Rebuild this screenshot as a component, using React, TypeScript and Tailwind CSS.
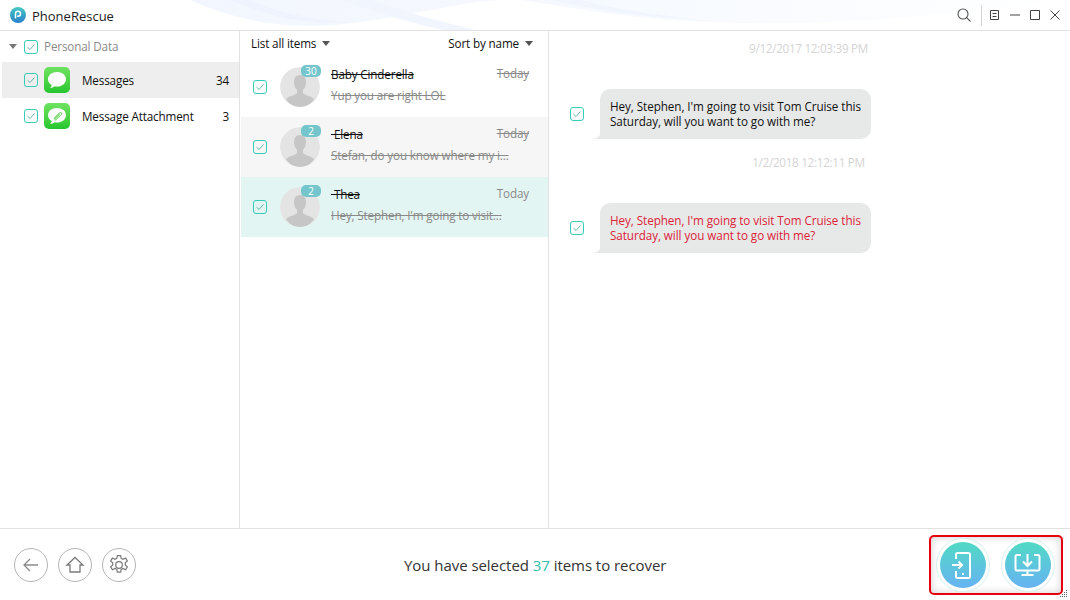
type Conversation = {
  name: string;
  preview: string;
  badge: string;
  struckDate: boolean;
  rowClass: string;
};

const conversations: Conversation[] = [
  { name: "Baby Cinderella", preview: "Yup you are right LOL", badge: "30", struckDate: true, rowClass: "bg-transparent" },
  { name: " Elena", preview: "Stefan, do you know where my i...", badge: "2", struckDate: true, rowClass: "bg-[#f6f6f6]" },
  { name: " Thea", preview: "Hey, Stephen, I'm going to visit...", badge: "2", struckDate: false, rowClass: "bg-[#e3f5f2]" },
];

function Check({ className = "" }: { className?: string }) {
  return (
    <span className={`flex h-[14px] w-[14px] shrink-0 items-center justify-center rounded-[3px] border border-[#35cdb8] ${className}`}>
      <svg width="10" height="10" viewBox="0 0 10 10" fill="none" stroke="#5fb8ae" strokeWidth="1">
        <path d="M1.5 5.2 4 7.5 8.5 2.5" />
      </svg>
    </span>
  );
}

function Caret({ color = "#555" }: { color?: string }) {
  return (
    <svg width="8" height="5" viewBox="0 0 8 5" className="shrink-0">
      <path d="M0 0h8L4 5z" fill={color} />
    </svg>
  );
}

function AppIcon({ clip }: { clip?: boolean }) {
  return (
    <span className="ml-[6px] flex h-[26px] w-[26px] shrink-0 items-center justify-center rounded-[5px] bg-gradient-to-b from-[#6ee35f] to-[#22c62e]">
      <svg width="22" height="20" viewBox="0 0 22 20">
        <path d="M11 2C5.8 2 2 5.2 2 9.2c0 2.500 1.500 4.600 3.800 5.900-.3 1.200-1 2.200-1.800 2.900 1.700-.1 3.300-.8 4.500-1.800.8.200 1.600.3 2.500.3 5.200 0 9-3.200 9-7.300S16.200 2 11 2z" fill="#fff" />
        {clip && <path d="M8 12.500 13.500 7c1.500-1.300 3 .4 1.800 1.700l-5.300 5c-.8.700-1.700-.2-1-1l4.500-4.300" fill="none" stroke="#7fdc74" strokeWidth="1.100" />}
      </svg>
    </span>
  );
}

function Avatar({ badge }: { badge: string }) {
  return (
    <div className="relative h-10 w-10 shrink-0">
      <svg width="40" height="40" viewBox="0 0 40 40" className="rounded-full">
        <circle cx="20" cy="20" r="20" fill="#e4e4e4" />
        <path d="M20 8c-4 0-6 3-6 7 0 3 1 6 3 8v3c-1 2-8 3-11 6 3 5 8 8 14 8s11-3 14-8c-3-3-10-4-11-6v-3c2-2 3-5 3-8 0-4-2-7-6-7z" fill="#c6c6c6" />
      </svg>
      <span className="absolute -right-px -top-[2px] flex h-3 w-5 items-center justify-center rounded-[5px] bg-[#74c6cc] text-[10px] leading-none tracking-normal text-white">
        {badge}
      </span>
    </div>
  );
}

function Bubble({ red }: { red?: boolean }) {
  return (
    <div className="flex items-center pl-[21px]">
      <Check />
      <div className="relative ml-[16px] flex h-[50px] w-[271px] items-center rounded-[10px] bg-[#e7e9e8] pl-[10px] pr-[8px]">
        <svg width="16" height="10" viewBox="0 0 16 10" className="absolute -left-[6px] bottom-0">
          <path d="M6 0v5C6 7 3 9 0 10h16V0z" fill="#e7e9e8" />
        </svg>
        <p className={`relative leading-[15px] tracking-[-0.07px] ${red ? "text-[#dc2338]" : "text-[#111]"}`}>
          Hey, Stephen, I'm going to visit Tom Cruise this Saturday, will you want to go with me?
        </p>
      </div>
    </div>
  );
}

function RoundButton({ children }: { children: React.ReactNode }) {
  return (
    <span className="flex h-[34px] w-[34px] items-center justify-center rounded-full border border-[#b5b5b5]">
      {children}
    </span>
  );
}

function ActionButton({ children }: { children: React.ReactNode }) {
  return (
    <span className="flex h-[54px] w-[54px] items-center justify-center rounded-full border border-[#d6f1ee] bg-white">
      <span className="flex h-[46px] w-[46px] items-center justify-center rounded-full bg-gradient-to-b from-[#50d9c3] to-[#67b2f2]">
        {children}
      </span>
    </span>
  );
}

export default function App() {
  return (
    <div className="relative flex h-[600px] w-[1070px] flex-col overflow-hidden bg-white font-['Open_Sans',sans-serif] text-[11.7px] tracking-[-0.15px] text-[#111]">
      <svg width="900" height="80" viewBox="0 0 900 80" className="pointer-events-none absolute left-[180px] top-0" fill="none">
        <defs>
          <linearGradient id="wave" x1="0" y1="0" x2="1" y2="0">
            <stop offset="0" stopColor="#f2f6fe" />
            <stop offset="0.55" stopColor="#f7faff" />
            <stop offset="1" stopColor="#ffffff" />
          </linearGradient>
        </defs>
        <path d="M10 0C50 18 90 26 130 26 200 26 290 -4 340 0 400 8 440 20 560 23 640 24 700 20 760 14 820 8 870 4 900 0z" fill="url(#wave)" />
        <path d="M50 0C90 16 120 25 170 22 130 20 90 10 70 0z" fill="#eef3fe" />
        <path d="M160 0C200 12 230 24 270 31L300 31C260 22 220 10 190 0z" fill="#f0f5fe" />
        <path d="M370 0C400 6 440 14 480 17L540 22C480 16 430 8 400 0z" fill="#f0f5fe" />
      </svg>

      <header className="relative flex h-[31px] shrink-0 items-center border-b border-[#e1e1e1] pl-[10px] pr-[10px]">
        <svg width="16" height="16" viewBox="0 0 16 16">
          <defs>
            <linearGradient id="logo" x1="0" y1="0" x2="0" y2="1">
              <stop offset="0" stopColor="#45c9c4" />
              <stop offset="1" stopColor="#2a7fc9" />
            </linearGradient>
          </defs>
          <circle cx="8" cy="8" r="8" fill="url(#logo)" />
          <path d="M5.500 11.500V6.800a2.500 2.500 0 1 1 2.500 2.500H7" fill="none" stroke="#fff" strokeWidth="1.500" />
        </svg>
        <span className="ml-[6px] pt-[3px] text-[13px] tracking-normal text-[#222]">PhoneRescue</span>
        <div className="ml-auto flex items-center">
          <svg width="14" height="14" viewBox="0 0 14 14" fill="none" stroke="#555" strokeWidth="1.100">
            <circle cx="6" cy="6" r="5" />
            <path d="m9.700 9.700 3.800 3.800" />
          </svg>
          <span className="ml-[10px] h-[21px] w-px bg-[#d5d5d5]" />
          <svg width="9" height="10" viewBox="0 0 9 10" fill="none" stroke="#444" className="ml-[8px]">
            <path d="M.5.500h8v9h-8zM2.500 3.500h4M2.500 6.500h4" />
          </svg>
          <svg width="10" height="2" viewBox="0 0 10 2" className="ml-[11px]">
            <path d="M0 1h10" stroke="#444" />
          </svg>
          <svg width="10" height="10" viewBox="0 0 10 10" fill="none" stroke="#444" className="ml-[10px]">
            <path d="M.5.500h9v9h-9z" />
          </svg>
          <svg width="10" height="10" viewBox="0 0 10 10" fill="none" stroke="#444" className="ml-[10px]">
            <path d="m.5.500 9 9M9.500.500l-9 9" />
          </svg>
        </div>
      </header>

      <main className="relative flex min-h-0 flex-1">
        <aside className="flex w-[240px] shrink-0 flex-col border-r border-[#e1e1e1] pt-[7px]">
          <div className="flex h-[17px] items-center pl-[9px]">
            <Caret color="#777" />
            <Check className="ml-[7px]" />
            <span className="ml-[6px] text-[#8b8b8b]">Personal Data</span>
          </div>
          <div className="ml-[2px] mt-[7px] flex h-9 items-center bg-[#eeeeee] pl-[22px] pr-[10px]">
            <Check />
            <AppIcon />
            <span className="ml-3 pt-[2px]">Messages</span>
            <span className="ml-auto pt-[2px]">34</span>
          </div>
          <div className="ml-[2px] flex h-9 items-center pl-[22px] pr-[10px]">
            <Check />
            <AppIcon clip />
            <span className="ml-3 pt-[2px]">Message Attachment</span>
            <span className="ml-auto pt-[2px]">3</span>
          </div>
        </aside>

        <section className="flex w-[309px] shrink-0 flex-col border-r border-[#e1e1e1]">
          <div className="flex h-[26px] items-center justify-between pl-[11px] pr-[15px]">
            <span className="flex items-center gap-[6px]">List all items <Caret /></span>
            <span className="flex items-center gap-[6px]">Sort by name <Caret /></span>
          </div>
          {conversations.map((item) => (
            <div key={item.name} className={`ml-px flex h-[60px] items-center pl-[12px] pr-[19px] ${item.rowClass}`}>
              <Check />
              <div className="ml-[13px]"><Avatar badge={item.badge} /></div>
              <div className="mb-[5px] ml-[11px] min-w-0 flex-1">
                <div className="flex items-start justify-between">
                  <span className="whitespace-pre leading-[16px] text-[#111] line-through">{item.name}</span>
                  <span className={`-mt-px leading-[16px] text-[#8a8a8a] ${item.struckDate ? "line-through" : ""}`}>Today</span>
                </div>
                <div className="mt-[5px] whitespace-nowrap leading-[16px] text-[#8a8a8a] line-through">{item.preview}</div>
              </div>
            </div>
          ))}
        </section>

        <section className="flex min-w-0 flex-1 flex-col">
          <p className="mt-[9px] h-[16px] pr-[2px] text-center leading-[16px] tracking-[-0.3px] text-[#d4d4d4]">9/12/2017 12:03:39 PM</p>
          <div className="mt-[33px]"><Bubble /></div>
          <p className="mt-[15px] h-[16px] pr-[2px] text-center leading-[16px] tracking-[-0.3px] text-[#d4d4d4]">1/2/2018 12:12:11 PM</p>
          <div className="mt-[33px]"><Bubble red /></div>
        </section>
      </main>

      <footer className="relative flex h-[72px] shrink-0 items-center border-t border-[#e1e1e1] pl-[14px] pr-[7px]">
        <div className="flex w-[122px] items-center gap-[10px]">
          <RoundButton>
            <svg width="18" height="18" viewBox="0 0 18 18" fill="none" stroke="#8a8a8a" strokeWidth="1.300">
              <path d="M16 9H2M8 3 2 9l6 6" />
            </svg>
          </RoundButton>
          <RoundButton>
            <svg width="20" height="20" viewBox="0 0 20 20" fill="none" stroke="#7a7a7a" strokeWidth="1.300">
              <path d="M2 10 10 2.500 18 10h-3v7H5v-7z" />
            </svg>
          </RoundButton>
          <RoundButton>
            <svg width="22" height="22" viewBox="0 0 20 20" fill="none" stroke="#7a7a7a" strokeWidth="1.100">
              <circle cx="10" cy="10" r="3" />
              <path d="M8.500 1.500h3l.5 2.500 1.700.8 2.300-1.100 1.600 2.600-1.900 1.700v2l1.900 1.700-1.600 2.600-2.300-1.100-1.700.8-.5 2.500h-3l-.5-2.500-1.700-.8-2.300 1.100-1.600-2.600 1.900-1.700v-2L2.400 6.300 4 3.700l2.300 1.100 1.700-.8z" />
            </svg>
          </RoundButton>
        </div>
        <p className="ml-[268px] whitespace-nowrap pt-[2px] text-[15px] tracking-[-0.05px] text-[#333]">
          You have selected <span className="text-[#2fc0ad]">37</span> items to recover
        </p>
        <div className="ml-auto flex h-[60px] w-[134px] items-center gap-[11px] rounded-[5px] border-2 border-[#e8000d] bg-white pl-[5px] shadow-[inset_0_0_9px_#cfcfcf]">
          <ActionButton>
            <svg width="28" height="28" viewBox="0 0 28 28" fill="none" stroke="#fff" strokeWidth="2">
              <path d="M7 8V3.500A1.500 1.500 0 0 1 8.500 2h11A1.500 1.500 0 0 1 21 3.500v22a1.500 1.500 0 0 1-1.500 1.500h-11A1.500 1.500 0 0 1 7 25.500V20" />
              <path d="M3 14h10M9.500 10.500 13 14l-3.500 3.500M13 23h2" />
            </svg>
          </ActionButton>
          <ActionButton>
            <svg width="30" height="30" viewBox="0 0 30 30" fill="none" stroke="#fff" strokeWidth="2">
              <path d="M8 5H4A1.500 1.500 0 0 0 2.500 6.500v12.500A1.500 1.500 0 0 0 4 20.500h21a1.500 1.500 0 0 0 1.500-1.500V6.500A1.500 1.500 0 0 0 25 5h-4" />
              <path d="M14.500 4v11M10 11.500l4.500 4.500 4.500-4.500M14.500 21v3M8.500 25h12" />
            </svg>
          </ActionButton>
        </div>
        <svg width="8" height="8" viewBox="0 0 8 8" className="absolute bottom-[2px] right-[2px]" fill="#666">
          <path d="M6 0h1v1H6zM4 2h1v1H4zM6 2h1v1H6zM2 4h1v1H2zM4 4h1v1H4zM6 4h1v1H6zM0 6h1v1H0zM2 6h1v1H2zM4 6h1v1H4zM6 6h1v1H6z" />
        </svg>
      </footer>
    </div>
  );
}
